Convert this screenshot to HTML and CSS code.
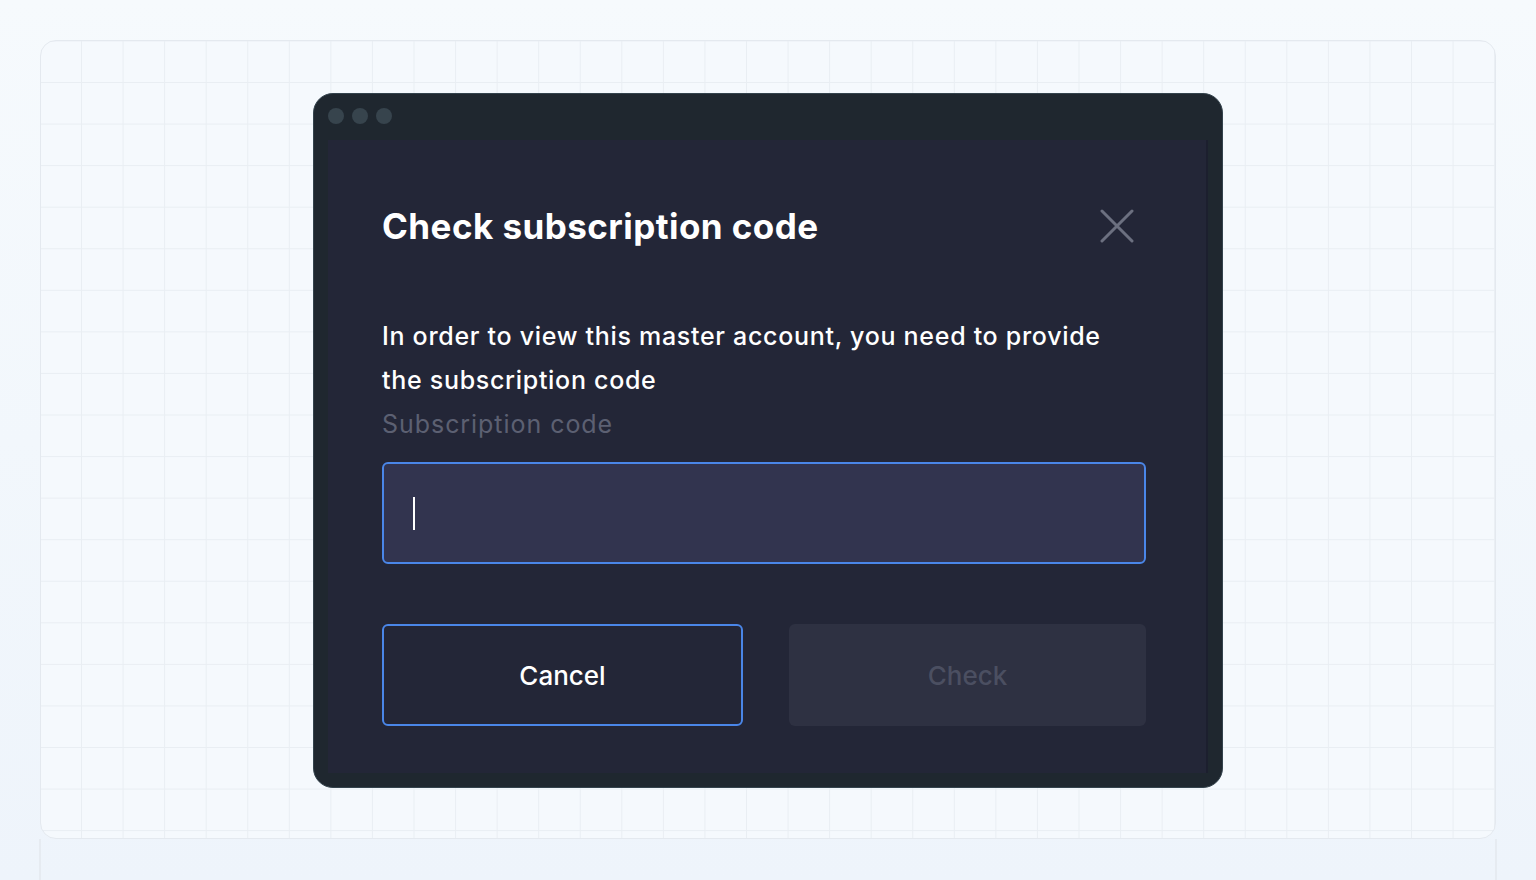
FILE: index.html
```html
<!DOCTYPE html>
<html lang="en">
<head>
<meta charset="utf-8">
<title>Check subscription code</title>
<link rel="stylesheet" href="styles.css">
</head>
<body>
<div class="page">
  <div class="board">
    <div class="window">
      <div class="titlebar">
        <span class="dot"></span><span class="dot"></span><span class="dot"></span>
      </div>
      <div class="screen">
        <div class="dialog">
          <div class="dialog-head">
            <h1 class="dialog-title">Check subscription code</h1>
            <button class="close" aria-label="Close">
              <svg width="34" height="34" viewBox="0 0 34 34" fill="none" stroke="#6c7080" stroke-width="3" stroke-linecap="round">
                <path d="M2 2 L32 32 M32 2 L2 32"/>
              </svg>
            </button>
          </div>
          <p class="dialog-text">In order to view this master account, you need to provide the subscription code</p>
          <label class="field-label">Subscription code</label>
          <div class="input"><span class="caret"></span></div>
          <div class="actions">
            <button class="btn btn-outline">Cancel</button>
            <button class="btn btn-disabled">Check</button>
          </div>
        </div>
      </div>
    </div>
  </div>
  <div class="board-tail"></div>
</div>
</body>
</html>
```
FILE: styles.css
```css
* { box-sizing: border-box; }
html, body { margin: 0; height: 100%; }
body {
  background: linear-gradient(180deg, #f6fafd 0%, #eef4fb 100%);
  font-family: Inter, "Noto Sans", "Liberation Sans", sans-serif;
  overflow: hidden;
}
.page {
  padding: 40px 40px 0 40px;
  height: 880px;
  display: flex;
  flex-direction: column;
}
.board {
  height: 799px;
  border: 1px solid #e4e9ef;
  border-radius: 16px;
  background-color: #f5f9fd;
  background-image:
    linear-gradient(to right, #e9eef3 1px, transparent 1px),
    linear-gradient(to bottom, #e9eef3 1px, transparent 1px);
  background-size: 41.57px 41.57px;
  background-position: 40px 41px;
  display: flex;
  align-items: center;
  justify-content: center;
  padding-top: 2px;
}
.board-tail {
  flex: 1;
  border-left: 2px solid #e6ebf1;
  border-right: 2px solid #e6ebf1;
  margin-left: -1px;
  margin-right: -1px;
}
.window {
  width: 910px;
  height: 695px;
  background: #1f272f;
  border: 1px solid #34434d;
  border-radius: 20px;
  padding: 0 14px 14px 14px;
  display: flex;
  flex-direction: column;
}
.titlebar {
  height: 46px;
  display: flex;
  align-items: center;
  gap: 8px;
  padding-bottom: 2px;
}
.dot {
  width: 16px;
  height: 16px;
  border-radius: 50%;
  background: #37444d;
}
.screen {
  flex: 1;
  background: #232637;
  border-right: 2px solid #1c1f2e;
  padding: 65px 60px 0 54px;
}
.dialog { width: 764px; }
.dialog-head {
  display: flex;
  align-items: center;
  justify-content: space-between;
}
.dialog-title {
  margin: 0;
  color: #ffffff;
  font-size: 35px;
  line-height: 42px;
  font-weight: 700;
  letter-spacing: 0.45px;
}
.close {
  background: none;
  border: 0;
  padding: 0;
  margin-right: 12px;
  width: 34px;
  height: 34px;
  display: flex;
  align-items: center;
  justify-content: center;
}
.dialog-text {
  margin: 67px 0 0 0;
  color: #ffffff;
  font-size: 25px;
  line-height: 44px;
  font-weight: 500;
  letter-spacing: 0.7px;
}
.field-label {
  display: block;
  color: #5c6072;
  font-size: 25px;
  line-height: 44px;
  font-weight: 400;
  letter-spacing: 0.95px;
}
.input {
  margin-top: 16px;
  height: 102px;
  background: #32344f;
  border: 2px solid #4a86e8;
  border-radius: 6px;
  display: flex;
  align-items: center;
  padding-left: 29px;
}
.caret {
  width: 2px;
  height: 33px;
  background: #ffffff;
}
.actions {
  margin-top: 60px;
  display: flex;
  gap: 46px;
}
.btn {
  flex: 1 1 0;
  min-width: 0;
  height: 102px;
  border-radius: 6px;
  font-family: Inter, "Noto Sans", "Liberation Sans", sans-serif;
  font-size: 26px;
  font-weight: 500;
}
.btn-outline {
  background: transparent;
  border: 2px solid #4a86e8;
  color: #ffffff;
}
.btn-disabled {
  background: #2e3142;
  border: 0;
  color: #4b4f61;
}
```
